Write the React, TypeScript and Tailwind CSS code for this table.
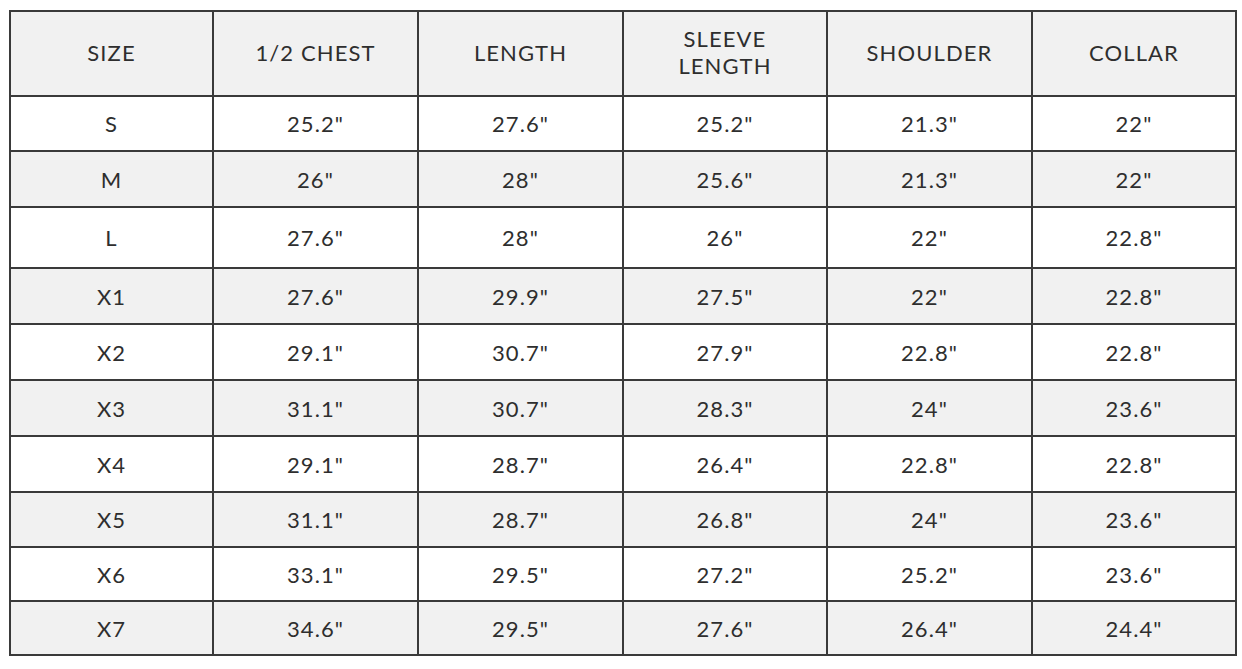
import React from "react";

const headers = ["SIZE", "1/2 CHEST", "LENGTH", "SLEEVE\nLENGTH", "SHOULDER", "COLLAR"];
const rows: string[][] = [
  ["S", '25.2"', '27.6"', '25.2"', '21.3"', '22"'],
  ["M", '26"', '28"', '25.6"', '21.3"', '22"'],
  ["L", '27.6"', '28"', '26"', '22"', '22.8"'],
  ["X1", '27.6"', '29.9"', '27.5"', '22"', '22.8"'],
  ["X2", '29.1"', '30.7"', '27.9"', '22.8"', '22.8"'],
  ["X3", '31.1"', '30.7"', '28.3"', '24"', '23.6"'],
  ["X4", '29.1"', '28.7"', '26.4"', '22.8"', '22.8"'],
  ["X5", '31.1"', '28.7"', '26.8"', '24"', '23.6"'],
  ["X6", '33.1"', '29.5"', '27.2"', '25.2"', '23.6"'],
  ["X7", '34.6"', '29.5"', '27.6"', '26.4"', '24.4"'],
];
const heights = ["h-[55px]", "h-[56px]", "h-[61px]", "h-[56px]", "h-[56px]", "h-[56px]", "h-[56px]", "h-[55px]", "h-[54px]", "h-[54px]"];
const widths = ["w-[203px]", "w-[205px]", "w-[205px]", "w-[204px]", "w-[205px]", "w-[204px]"];

export default function App() {
  return (
    <div className="w-[1242px] h-[669px] bg-white pt-[10px] pl-[9px]" style={{ fontFamily: "Lato, 'Open Sans', sans-serif" }}>
      <table className="border-collapse border-2 border-[#3a3a3a] text-[#2e2e2e] text-[22px] tracking-[0.05em] table-fixed w-[1226px]">
        <thead>
          <tr className="h-[85px] bg-[#f1f1f1]">
            {headers.map((h, i) => (
              <th key={i} className={`${widths[i]} border-2 border-[#3a3a3a] font-normal text-center align-middle leading-[27px] whitespace-pre-line p-0 pb-[3px]`}>
                {h}
              </th>
            ))}
          </tr>
        </thead>
        <tbody>
          {rows.map((r, ri) => (
            <tr key={ri} className={`${heights[ri]} ${ri % 2 === 1 ? "bg-[#f1f1f1]" : "bg-white"}`}>
              {r.map((c, ci) => (
                <td key={ci} className="border-2 border-[#3a3a3a] text-center align-middle p-0">
                  {c}
                </td>
              ))}
            </tr>
          ))}
        </tbody>
      </table>
    </div>
  );
}
